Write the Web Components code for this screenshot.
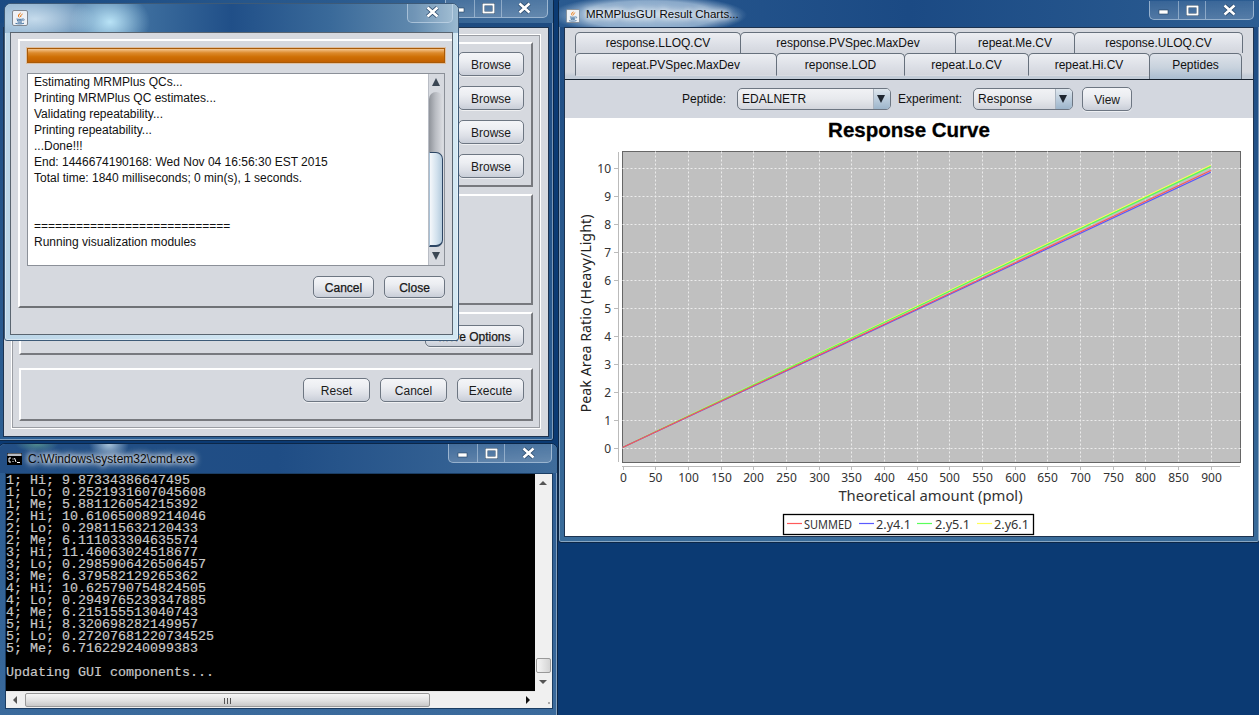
<!doctype html>
<html lang="en">
<head>
<meta charset="utf-8">
<title>MRMPlusGUI</title>
<style>
  html, body { margin: 0; height: 715px; overflow: hidden; background: #0b3a73; }
  body { font: 12px "Liberation Sans", Arial, sans-serif; color: #111; }
</style>
</head>
<body>

<template id="desktop-view-template">
  <style>
    :host { display: block; position: relative; width: 1259px; height: 715px; overflow: hidden; background: #0b3a73; }
  </style>
  <slot></slot>
</template>

<template id="aero-window-template">
  <style>
    :host { display: block; position: absolute; box-sizing: border-box; border: 1px solid var(--edge, #0c2748); border-radius: 7px 7px 3px 3px;
      box-shadow: inset 0 0 0 1px rgba(255,255,255,.4); background: var(--frame, linear-gradient(#1c4a82, #2f6496)); }
    .title { position: absolute; left: 0; right: 0; top: 0; height: var(--title-h, 27px); display: flex; align-items: center; padding: 0 5px 0 var(--title-left, 6px); box-sizing: border-box; background: var(--title, none); border-radius: 6px 6px 0 0; }
    .caption { margin-left: 6px; font: 12px "Liberation Sans", Arial, sans-serif; color: #0a0a0a; padding: 2px 9px 2px 0; white-space: nowrap;
      text-shadow: 0 0 5px #fff, 0 0 7px #fff, 0 0 9px rgba(255,255,255,.9); }
    .ctl { position: absolute; right: var(--ctl-right, 5px); top: var(--ctl-top, 0); }
    .client { position: absolute; left: var(--l, 6px); right: var(--r, 5px); top: var(--t, 27px); bottom: var(--b, 4px); box-sizing: border-box; border: 1px solid var(--client-edge, #1d3350); background: var(--client, #d6d9df); overflow: hidden; }
  </style>
  <div class="title"><slot name="icon"></slot><span class="caption"><slot name="caption"></slot></span></div>
  <div class="ctl"><slot name="controls"></slot></div>
  <div class="client"><slot></slot></div>
</template>

<template id="win-controls-template">
  <style>
    :host { display: flex; height: 19px; box-sizing: border-box; border: 1px solid rgba(205,222,238,.6); border-top: 0; border-radius: 0 0 5px 5px; background: linear-gradient(rgba(255,255,255,.08), rgba(255,255,255,.2)); }
    div { display: flex; align-items: center; justify-content: center; }
    .min { width: 28px; border-right: 1px solid rgba(205,222,238,.5); }
    .max { width: 26px; border-right: 1px solid rgba(205,222,238,.5); }
    .close { width: var(--close-w, 45px); }
    svg { display: block; }
  </style>
  <div class="min"><svg width="12" height="10" viewBox="0 0 12 10"><rect x="1" y="5" width="9" height="4" fill="#fff" stroke="#23405f" stroke-width=".6"/></svg></div>
  <div class="max"><svg width="13" height="11" viewBox="0 0 13 11"><rect x="1.5" y="1.5" width="10" height="8" fill="none" stroke="#23405f" stroke-width="3"/><rect x="1.5" y="1.5" width="10" height="8" fill="none" stroke="#fff" stroke-width="2"/></svg></div>
  <div class="close"><svg width="15" height="12" viewBox="0 0 15 12"><path d="M2.5 1.5 12.5 10.5M12.5 1.5 2.5 10.5" stroke="#2b4a6c" stroke-width="4.2"/><path d="M2.5 1.5 12.5 10.5M12.5 1.5 2.5 10.5" stroke="#fff" stroke-width="2.6"/></svg></div>
</template>

<template id="close-only-template">
  <style>
    :host { display: flex; align-items: center; justify-content: center; width: 46px; height: 19px; box-sizing: border-box; border: 1px solid rgba(205,222,238,.6); border-top: 0; border-radius: 0 0 5px 5px; background: rgba(255,255,255,.1); }
    svg { display: block; margin-left: 4px; margin-top: -3px; }
  </style>
  <svg width="15" height="12" viewBox="0 0 15 12"><path d="M2.5 1.5 12.5 10.5M12.5 1.5 2.5 10.5" stroke="#2b4a6c" stroke-width="4.2"/><path d="M2.5 1.5 12.5 10.5M12.5 1.5 2.5 10.5" stroke="#fff" stroke-width="2.6"/></svg>
</template>

<template id="java-icon-template">
  <style>
    :host { display: block; width: var(--s, 16px); height: var(--s, 16px); flex: none; }
    svg { display: block; width: 100%; height: 100%; }
  </style>
  <svg viewBox="0 0 16 16">
    <rect x=".5" y=".5" width="15" height="15" rx="1.5" fill="#eef1f5" stroke="#7f8790"/>
    <path d="M8.6 2.2C9.4 3.8 6.6 4.6 7 6.2c.2.8.9 1.3 1 1.8-.9-.5-2.3-1.300-2-2.700C6.300 4 8.400 3.500 8.600 2.200Z" fill="#e76f00"/>
    <path d="M10.500 4C9 5 8.500 5.500 8.700 7" fill="none" stroke="#e76f00"/>
    <path d="M4.500 9c2 .5 5 .5 6.500 0M5 10.500c1.800.4 4.200.4 5.500 0M5.500 12c1.500.3 3 .3 4.500 0M3.500 13.400c2.500.7 6.500.7 8.500-.2" fill="none" stroke="#3f70a0"/>
    <path d="M11 9c1.500-.3 1.800 1.200.2 1.800" fill="none" stroke="#3f70a0" stroke-width=".8"/>
  </svg>
</template>

<template id="cmd-icon-template">
  <style>
    :host { display: block; width: 15px; height: 12px; flex: none; }
    svg { display: block; }
  </style>
  <svg width="15" height="12" viewBox="0 0 15 12">
    <rect width="15" height="12" fill="#000"/>
    <rect x=".5" y=".5" width="14" height="2.500" fill="#b9bdc4"/>
    <path d="M4 5H2V9H4M6 5.500V6.500M6 8V9M7.500 5 9 9M10 9.500H13" fill="none" stroke="#fff"/>
  </svg>
</template>

<template id="swing-button-template">
  <style>
    :host { display: inline-flex; align-items: center; justify-content: center; box-sizing: border-box; width: var(--w, 66px); height: var(--btn-h, 24px); padding-top: 1px; flex: none; border: 1px solid #6d7682; border-radius: 5px;
      background: linear-gradient(#f4f5f8 0%, #eceef2 35%, #dcdfe6 70%, #c9ced8 100%); box-shadow: 0 1px 0 rgba(255,255,255,.6);
      font: 12px "Liberation Sans", Arial, sans-serif; color: #1a1a1a; }
    :host([strong]) { -webkit-text-stroke: .25px #111; }
  </style>
  <slot></slot>
</template>

<template id="etched-panel-template">
  <style>
    :host { display: flex; box-sizing: border-box; flex: none; border-style: solid; border-width: 2px; border-color: #fff #77797e #77797e #fff; padding: var(--pad, 8px 7px); flex-direction: var(--dir, column); gap: var(--gap, 10px); align-items: var(--cross, flex-end); justify-content: var(--just, flex-start); height: var(--panel-h, auto); }
  </style>
  <slot></slot>
</template>

<template id="swing-scroll-template">
  <style>
    :host { display: block; position: relative; box-sizing: border-box; width: 16px; flex: none; background: #d6d9df; border-left: 1px solid #b9bdc5; }
    .up, .down { position: absolute; left: 3px; width: 0; height: 0; border-left: 4.5px solid transparent; border-right: 4.5px solid transparent; }
    .up { top: 4px; border-bottom: 8px solid #3a4653; }
    .down { bottom: 5px; border-top: 8px solid #3a4653; }
    .track { position: absolute; left: 0; right: 1px; top: 18px; bottom: 18px; border-radius: 8px 8px 0 0; background: linear-gradient(90deg, #8f939a, #b8bbc1 45%, #dcdee3); }
    .thumb { position: absolute; left: 0; right: 0; top: 60px; bottom: 0; box-sizing: border-box; border: 1px solid #2d4664; border-left-color: #a9c0d4; border-bottom-width: 2px; border-radius: 0 7px 7px 0; background: linear-gradient(90deg, #f5f8fb, #d3e2ee 55%, #b4cbdd); }
  </style>
  <div class="up"></div>
  <div class="track"><div class="thumb"></div></div>
  <div class="down"></div>
</template>

<template id="log-pane-template">
  <style>
    :host { display: flex; box-sizing: border-box; height: 193px; margin: 10px 0; border: 1px solid #8b9098; background: #fff; }
    .text { flex: 1; padding: 0 0 0 6px; font: 12px/16px "Liberation Sans", Arial, sans-serif; color: #111; white-space: pre; overflow: hidden; }
  </style>
  <div class="text"><slot></slot></div>
  <swing-scroll></swing-scroll>
</template>

<template id="orange-bar-template">
  <style>
    :host { display: block; box-sizing: border-box; height: 15px; border: 1px solid #a85a08; box-shadow: 0 0 0 1px rgba(230,170,110,.55); background: linear-gradient(#f4c690 0%, #dc8a2c 30%, #cf7006 60%, #c26000 100%); }
  </style>
</template>

<template id="chart-tabs-template">
  <style>
    :host { display: block; box-sizing: border-box; height: 52px; padding: 4px 0 0 10px; background: linear-gradient(#d6d9df 44px, #c3ccd7 48px); border-bottom: 1px solid #15202c; }
    .row { display: flex; height: 21px; }
    .row:first-child { margin-left: -1px; }
    .row + .row { height: 26px; }
    .tab { box-sizing: border-box; display: flex; align-items: center; justify-content: center; flex: none; border: 1px solid #66707c; border-bottom: 0; border-radius: 5px 5px 0 0; margin-right: -1px; background: linear-gradient(#eceef2, #dcdfe6 60%, #d3d6dd); font-size: 12px; white-space: nowrap; }
    .row + .row .tab { height: 23px; border-bottom: 1px solid #d9dce2; }
    .row + .row .sel { height: 26px; border-bottom: 0; padding-bottom: 3px; background: linear-gradient(#dde2e9, #c8d2dd 55%, #a9bccf); }
  </style>
  <div class="row" id="a"></div>
  <div class="row" id="b"></div>
</template>

<template id="swing-combo-template">
  <style>
    :host { display: inline-flex; box-sizing: border-box; width: var(--w, 154px); height: 22px; flex: none; border: 1px solid #6d7682; border-radius: 5px; overflow: hidden; font: 12px "Liberation Sans", Arial, sans-serif; color: #111;
      background: linear-gradient(#f1f2f5, #e7e9ed 50%, #d2d5dc); }
    .v { flex: 1; padding-left: 4px; line-height: 20px; white-space: nowrap; }
    .b { width: 16px; position: relative; background: linear-gradient(#dfe6ed, #b9cbdb 55%, #9db5cb); border-left: 1px solid #aab4c0; }
    .b::after { content: ""; position: absolute; left: 3px; top: 6px; border-left: 4.500px solid transparent; border-right: 4.500px solid transparent; border-top: 8px solid #1e2630; }
  </style>
  <div class="v"><slot></slot></div>
  <div class="b"></div>
</template>

<template id="chart-toolbar-template">
  <style>
    :host { display: flex; align-items: center; box-sizing: border-box; height: 38px; padding-left: 117px; background: #d3d7df; font-size: 12px; color: #111; }
  </style>
  <slot></slot>
</template>

<template id="response-chart-template">
  <style>
    :host { display: block; height: 418px; background: #fff; }
    svg { display: block; }
  </style>
  <svg id="s" width="688" height="418" viewBox="565 118 688 418"></svg>
</template>

<template id="console-pane-template">
  <style>
    :host { display: grid; grid-template-columns: 1fr 17px; grid-template-rows: 1fr 17px; height: 100%; background: #f0f0f0; }
    .out { background: #000; color: #c8c8c8; font: 13.333px/12px "Liberation Mono", monospace; -webkit-text-stroke: .2px #c8c8c8; white-space: pre; overflow: hidden; padding-top: 1px; min-height: 0; }
    .v { position: relative; background: #f0f0f0; }
    .v i { position: absolute; left: 4px; width: 0; height: 0; border-left: 4px solid transparent; border-right: 4px solid transparent; }
    .v .u { top: 7px; border-bottom: 4px solid #555; }
    .v .d { bottom: 7px; border-top: 4px solid #555; }
    .v b { position: absolute; left: 1px; right: 1px; top: 184px; height: 15px; border: 1px solid #999; border-radius: 2px; box-sizing: border-box; background: linear-gradient(90deg, #f6f6f6, #d4d4d4); }
    .h { position: relative; background: #f0f0f0; border-top: 1px solid #e4e4e4; }
    .h i { position: absolute; top: 4px; width: 0; height: 0; border-top: 4px solid transparent; border-bottom: 4px solid transparent; }
    .h .l { left: 7px; border-right: 4px solid #555; }
    .h .r { right: 5px; border-left: 4px solid #111; }
    .h b { position: absolute; left: 19px; width: 405px; top: 1px; bottom: 1px; box-sizing: border-box; border: 1px solid #999; border-radius: 2px; background: linear-gradient(#f7f7f7, #e4e4e4 50%, #c9c9c9); }
    .h b::after { content: ""; position: absolute; left: 198px; top: 4px; width: 7px; height: 6px; background: repeating-linear-gradient(90deg, #555 0 1px, transparent 1px 3px); }
    .c { background: radial-gradient(circle at 14px 12px, #aaa 1px, transparent 1.500px) 0 0, #f0f0f0; }
  </style>
  <div class="out"><slot></slot></div>
  <div class="v"><i class="u"></i><b></b><i class="d"></i></div>
  <div class="h"><i class="l"></i><b></b><i class="r"></i></div>
  <div class="c"></div>
</template>

<desktop-view>
  <aero-window id="back" style="left:-3px;top:-5px;width:557px;height:446px;--t:31px;--b:3px;--l:5px;--r:4px;--frame:linear-gradient(#1d4a80,#2d5f93);--title:linear-gradient(90deg,#1a4a82,#2a5a8e 60%,#3f6c9b);--ctl-right:5px;--ctl-top:3px">
    <win-controls slot="controls"></win-controls>
    <back-form>
      <etched-panel style="--panel-h:145px">
        <swing-button>Browse</swing-button>
        <swing-button>Browse</swing-button>
        <swing-button>Browse</swing-button>
        <swing-button>Browse</swing-button>
      </etched-panel>
      <etched-panel style="--panel-h:111px"></etched-panel>
      <etched-panel style="--panel-h:43px;--pad:11px 7px 0"><swing-button strong style="--w:99px;--btn-h:22px">More Options</swing-button></etched-panel>
      <etched-panel class="last" style="--panel-h:53px;--dir:row;--just:flex-end;--cross:flex-start;--pad:8px 7px"><swing-button style="--w:67px">Reset</swing-button><swing-button style="--w:67px">Cancel</swing-button><swing-button style="--w:67px">Execute</swing-button></etched-panel>
    </back-form>
  </aero-window>

  <aero-window id="cmd" style="left:-2px;top:443px;width:560px;height:275px;--t:29px;--b:8px;--l:6px;--r:4px;--client-edge:#1b3d63;--frame:linear-gradient(#2a5a90,#3a6a9c);--title:radial-gradient(ellipse 20px 16px at 110px 0,rgba(225,245,255,.7),transparent),radial-gradient(ellipse 22px 8px at 38px 0,rgba(120,190,150,.55),transparent),linear-gradient(90deg,#234f85,#1f4d85 50%,#3f6c9b);--title-h:29px;--title-left:8px;--ctl-right:5px;--ctl-top:0">
    <cmd-icon slot="icon"></cmd-icon>
    <span slot="caption">C:\Windows\system32\cmd.exe</span>
    <win-controls slot="controls" style="--close-w:46px"></win-controls>
    <console-pane>1; Hi; 9.87334386647495
1; Lo; 0.2521931607045608
1; Me; 5.881126054215392
2; Hi; 10.610650089214046
2; Lo; 0.298115632120433
2; Me; 6.111033304635574
3; Hi; 11.46063024518677
3; Lo; 0.2985906426506457
3; Me; 6.379582129265362
4; Hi; 10.625790754824505
4; Lo; 0.2949765239347885
4; Me; 6.215155513040743
5; Hi; 8.320698282149957
5; Lo; 0.27207681220734525
5; Me; 6.716229240099383

Updating GUI components...</console-pane>
  </aero-window>

  <aero-window id="charts" style="left:558px;top:-4px;width:702px;height:547px;--t:30px;--b:5px;--l:5px;--r:5px;--frame:linear-gradient(#1c4a82,#3a6c9a);--title:radial-gradient(ellipse 98px 20px at 90px 18px,rgba(205,225,242,.8),rgba(205,225,242,.6) 70%,transparent),linear-gradient(90deg,#2a5a90,#1b4a84 50%,#2c5d92);--title-h:30px;--title-left:7px;--ctl-right:5px;--ctl-top:4px">
    <java-icon slot="icon" style="--s:14px;margin-top:7px"></java-icon>
    <span slot="caption" style="position:relative;top:2px;font-size:11.5px">MRMPlusGUI Result Charts...</span>
    <win-controls slot="controls" style="--close-w:47px"></win-controls>
    <chart-tabs></chart-tabs>
    <chart-toolbar>
      <span>Peptide:</span>
      <swing-combo style="--w:154px;margin-left:11px">EDALNETR</swing-combo>
      <span style="margin-left:7px">Experiment:</span>
      <swing-combo style="--w:100px;margin-left:11px">Response</swing-combo>
      <swing-button style="--w:50px;margin-left:9px">View</swing-button>
    </chart-toolbar>
    <response-chart></response-chart>
  </aero-window>

  <aero-window id="dialog" style="left:4px;top:3px;width:455px;height:338px;--t:28px;--b:5px;--l:5px;--r:5px;--edge:#3d5a78;--client-edge:#5a6570;--frame:linear-gradient(90deg,#bcd6e8,#cfe4f1 50%,#d3e8f3);--title:radial-gradient(ellipse 40px 30px at 105px 18px,rgba(190,232,250,.95),transparent),radial-gradient(ellipse 60px 24px at 30px 15px,rgba(205,225,240,.9),transparent),linear-gradient(90deg,#8fb2cf,#3e6f9f 30%,#204f88 50%,#3a6a9a 72%,#5f88ad 90%,#9bbad1);--title-h:29px;--title-left:7px;--ctl-right:5px;--ctl-top:0">
    <java-icon slot="icon" style="margin-bottom:2px"></java-icon>
    <close-only slot="controls"></close-only>
    <progress-dialog>
      <orange-bar></orange-bar>
      <log-pane>Estimating MRMPlus QCs...
Printing MRMPlus QC estimates...
Validating repeatability...
Printing repeatability...
...Done!!!
End: 1446674190168: Wed Nov 04 16:56:30 EST 2015
Total time: 1840 milliseconds; 0 min(s), 1 seconds.


============================
Running visualization modules</log-pane>
      <div slot="actions"><swing-button strong style="--w:61px;--btn-h:22px">Cancel</swing-button><swing-button strong style="--w:61px;--btn-h:22px">Close</swing-button></div>
    </progress-dialog>
  </aero-window>
</desktop-view>

<script>
  // simple helper: every element just stamps its template into an open shadow root
  function stamp(name, onReady) {
    customElements.define(name, class extends HTMLElement {
      constructor() {
        super();
        const templ = document.querySelector('#' + name + '-template');
        this.attachShadow({mode: 'open'}).appendChild(templ.content.cloneNode(true));
        if (onReady) onReady(this.shadowRoot);
      }
    });
  }

  class BackForm extends HTMLElement {
    constructor() {
      super();
      this.attachShadow({mode: 'open'}).innerHTML = `
        <style>
          :host { display: block; box-sizing: border-box; height: 100%; padding: 6px 7px 7px; }
          .etch { box-sizing: border-box; height: 100%; border: 1px solid #fff; outline: 1px solid #9a9da3; outline-offset: -2px; padding: 7px; display: flex; flex-direction: column; }
          ::slotted(:nth-child(2)), ::slotted(:nth-child(3)) { margin-top: 7px; }
          ::slotted(.last) { margin-top: 13px; }
        </style>
        <div class="etch"><slot></slot></div>`;
    }
  }

  class ProgressDialog extends HTMLElement {
    constructor() {
      super();
      this.attachShadow({mode: 'open'}).innerHTML = `
        <style>
          :host { display: block; padding: 6px 0 0 7px; height: 100%; box-sizing: border-box; }
          .panel { box-sizing: border-box; height: 269px; border-style: solid; border-width: 2px 0 2px 2px; border-color: #fff #fff #6f7276 #fff; padding: 7px 7px 0; }
          ::slotted([slot=actions]) { display: flex; justify-content: flex-end; gap: 10px; }
        </style>
        <div class="panel"><slot></slot><slot name="actions"></slot></div>`;
    }
  }

  function buildTabs(root) {
    const rowA = [['response.LLOQ.CV', 166], ['response.PVSpec.MaxDev', 216], ['repeat.Me.CV', 120], ['response.ULOQ.CV', 169]];
    const rowB = [['repeat.PVSpec.MaxDev', 202], ['reponse.LOD', 129], ['repeat.Lo.CV', 125], ['repeat.Hi.CV', 122], ['Peptides', 93]];
    const fill = (id, list) => root.getElementById(id).innerHTML = list.map(([t, w]) =>
      `<div class="tab${t == 'Peptides' ? ' sel' : ''}" style="width:${w}px">${t}</div>`).join('');
    fill('a', rowA);
    fill('b', rowB);
  }

  function buildChart(root) {
    const x0 = 622.5, xStep = 32.68, y0 = 447.5, yStep = 28;
    const left = 622.5, right = 1240.5, top = 151.5, bottom = 462.5;
    const tick = 'font-family="Noto Sans" font-size="12" fill="#333"';
    let out = `<rect x="${left}" y="${top}" width="${right - left}" height="${bottom - top}" fill="#c0c0c0" stroke="#666"/>`;
    for (let i = 0; i <= 18; i++) {
      const x = Math.round(x0 + i * xStep) + 0.5;
      if (i) out += `<path d="M${x} ${top}V${bottom}" stroke="#ececec" stroke-dasharray="2 2"/>`;
      out += `<path d="M${x} 466V470" stroke="#bbb"/>`;
      out += `<text x="${x}" y="482" text-anchor="middle" ${tick}>${i * 50}</text>`;
    }
    for (let i = 0; i <= 10; i++) {
      const y = Math.round(y0 - i * yStep) + 0.5;
      out += `<path d="M${left} ${y}H${right}" stroke="#ececec" stroke-dasharray="2 2"/>`;
      out += `<path d="M614 ${y}H618" stroke="#bbb"/>`;
      out += `<text x="611" y="${y + 4.500}" text-anchor="end" ${tick}>${i}</text>`;
    }
    out += `<path d="M618.500 152V462M622 466.500H1240" stroke="#bbb" fill="none"/>`;
    const xEnd = x0 + 18 * xStep;
    const series = [[10.08, '#ffff55'], [10.03, '#55ff55'], [9.83, '#5555ff'], [9.89, '#ff5555']];
    for (const [v, c] of series) {
      out += `<line x1="${x0}" y1="${y0}" x2="${xEnd}" y2="${y0 - v * yStep}" stroke="${c}" stroke-width="1.200"/>`;
    }
    out += `<text x="909" y="137" text-anchor="middle" font-family="Liberation Sans" font-weight="700" font-size="20.500" stroke="#000" stroke-width=".3" fill="#000">Response Curve</text>`;
    out += `<text x="930.500" y="501" text-anchor="middle" font-family="Noto Sans" font-size="14.800" fill="#333">Theoretical amount (pmol)</text>`;
    out += `<text transform="translate(591 313.500) rotate(-90)" text-anchor="middle" font-family="Noto Sans" font-size="14.300" fill="#222">Peak Area Ratio (Heavy/Light)</text>`;
    out += `<rect x="783.500" y="514.500" width="250" height="20" fill="#fff" stroke="#000" stroke-width="1.300"/>`;
    const legend = [['SUMMED', '#ff5a5a', 787, 804, 48], ['2.y4.1', '#5a5aff', 859, 876, 35], ['2.y5.1', '#5aff5a', 917, 935, 35], ['2.y6.1', '#ffff5a', 977, 994, 35]];
    for (const [t, c, lx, tx, len] of legend) {
      out += `<line x1="${lx}" y1="523.500" x2="${lx + 15}" y2="523.500" stroke="${c}" stroke-width="1.200"/>`;
      out += `<text x="${tx}" y="529" textLength="${len}" lengthAdjust="spacingAndGlyphs" font-family="Noto Sans" font-size="12" fill="#333">${t}</text>`;
    }
    root.getElementById('s').innerHTML = out;
  }

  stamp('desktop-view');
  stamp('aero-window');
  stamp('win-controls');
  stamp('close-only');
  stamp('java-icon');
  stamp('cmd-icon');
  stamp('swing-button');
  stamp('etched-panel');
  stamp('swing-scroll');
  stamp('log-pane');
  stamp('orange-bar');
  stamp('chart-tabs', buildTabs);
  stamp('swing-combo');
  stamp('chart-toolbar');
  stamp('response-chart', buildChart);
  stamp('console-pane');
  customElements.define('back-form', BackForm);
  customElements.define('progress-dialog', ProgressDialog);
</script>
</body>
</html>
